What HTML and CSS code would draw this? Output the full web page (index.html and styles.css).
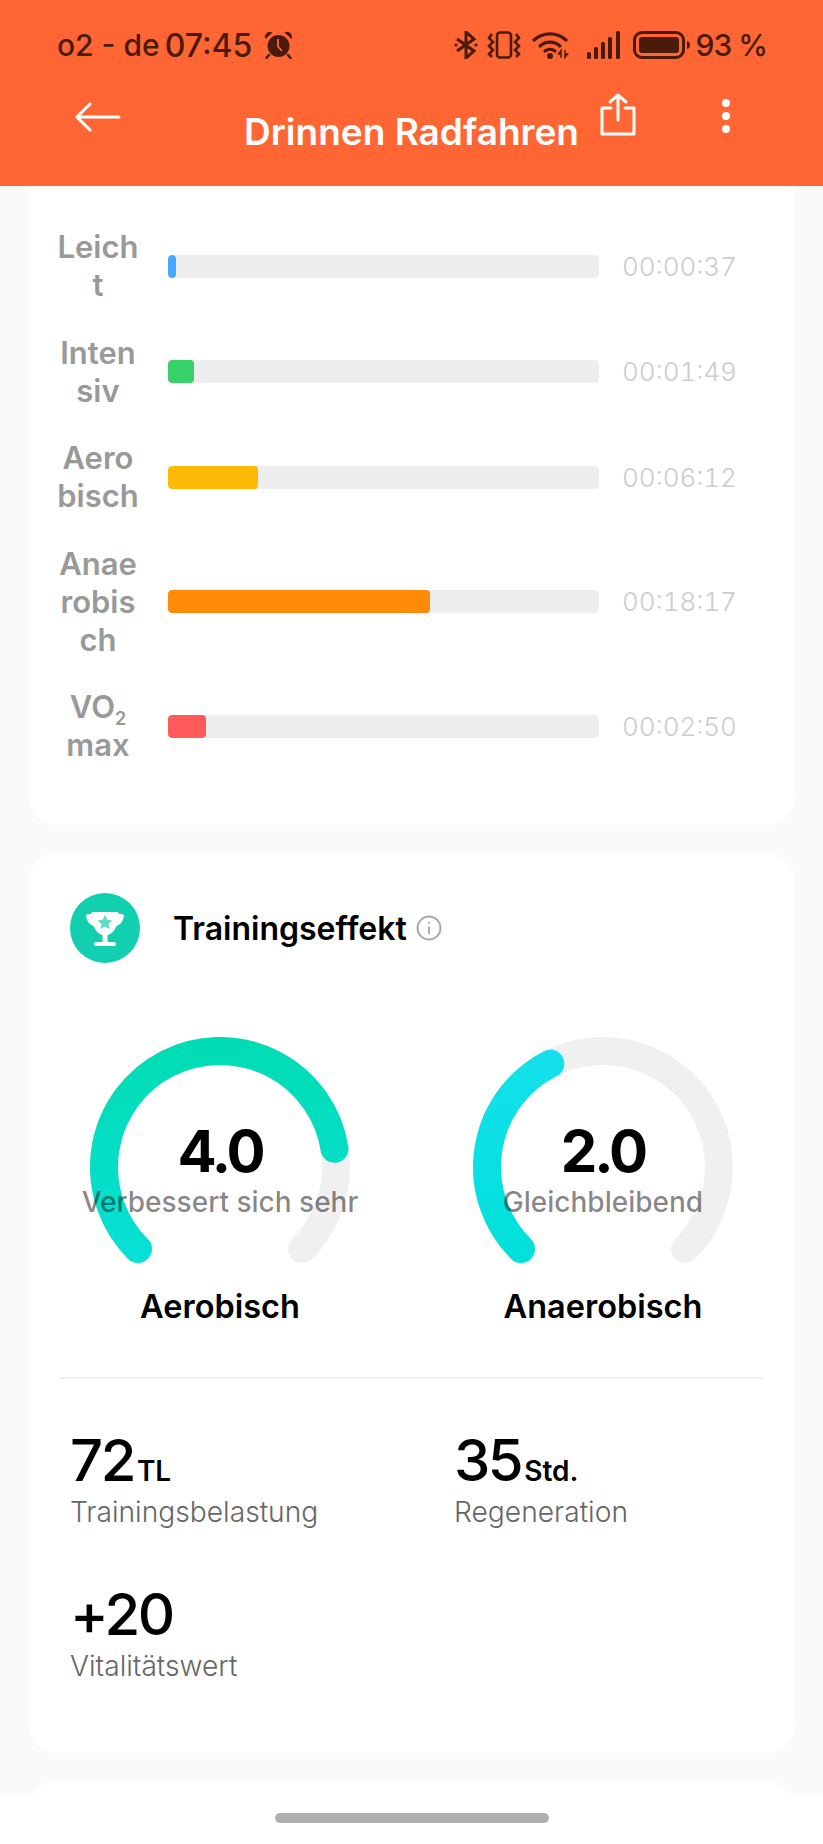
FILE: index.html
```html
<!DOCTYPE html>
<html lang="de">
<head>
  <meta charset="UTF-8" />
  <meta name="viewport" content="width=device-width, initial-scale=1.0"/>
  <title>Drinnen Radfahren</title>
  <link rel="stylesheet" href="styles.css">
</head>
<body>

<div class="screen">

  <header class="top">
    <div class="status">
      <div class="status-left">
        <span class="carrier">o2 - de</span>
        <span class="clock">07:45</span>
        <svg class="alarm" width="29" height="28" viewBox="0 0 29 28">
          <circle cx="14.5" cy="15" r="11" fill="#4a1b0b"/>
          <path d="M1.5 8 A5 5 0 0 1 8.5 1.5 Z M27.5 8 A5 5 0 0 0 20.5 1.5 Z" fill="#4a1b0b"/>
          <path d="M5 24 L2.5 27 M24 24 L26.5 27" stroke="#4a1b0b" stroke-width="2.5" stroke-linecap="round"/>
          <path d="M14 8 V15.5 L18 20" fill="none" stroke="#ff6633" stroke-width="1.8"/>
        </svg>
      </div>
      <div class="status-right">
        <svg class="ic-bt" width="24" height="28" viewBox="0 0 24 28" fill="none" stroke="#4a1b0b" stroke-width="3">
          <path d="M3 8 L20 20 L12 27 V1 L20 8 L3 20"/>
          <circle cx="2" cy="14" r="1.6" fill="#4a1b0b" stroke="none"/>
          <circle cx="22" cy="14" r="1.6" fill="#4a1b0b" stroke="none"/>
        </svg>
        <svg class="ic-vib" width="34" height="28" viewBox="0 0 34 28" fill="none" stroke="#4a1b0b" stroke-width="2.6">
          <rect x="10" y="1.5" width="14" height="25" rx="3"/>
          <path d="M5 3 L2 7 L6 11 L2 15 L6 19 L2 23 L5 26"/>
          <path d="M29 3 L32 7 L28 11 L32 15 L28 19 L32 23 L29 26"/>
        </svg>
        <svg class="ic-wifi" width="38" height="28" viewBox="0 0 38 28" fill="none" stroke="#4a1b0b" stroke-width="3.2" stroke-linecap="round">
          <path d="M2 9 A24 24 0 0 1 34 9"/>
          <path d="M8 15 A15 15 0 0 1 28 15"/>
          <path d="M13 20 A8 8 0 0 1 23 20"/>
          <circle cx="18" cy="25" r="3" fill="#4a1b0b" stroke="none"/>
          <path d="M29 27 V20 M26.5 23 L29 19.5 V23 Z M33 19 V26 M35.5 23 L33 26.5 V23 Z" stroke-width="1.4" stroke-linecap="butt" fill="#4a1b0b"/>
        </svg>
        <svg class="ic-signal" width="34" height="28" viewBox="0 0 34 28" fill="#4a1b0b">
          <rect x="0" y="21" width="4" height="7" rx="1.5"/>
          <rect x="7" y="16" width="4" height="12" rx="1.5"/>
          <rect x="14" y="11" width="4" height="17" rx="1.5"/>
          <rect x="21" y="6" width="4" height="22" rx="1.5"/>
          <rect x="29" y="0" width="4" height="28" rx="1.5"/>
        </svg>
        <svg class="ic-batt" width="59" height="28" viewBox="0 0 59 28" fill="none">
          <rect x="1.5" y="1.5" width="49" height="25" rx="7.5" stroke="#4a1b0b" stroke-width="3"/>
          <rect x="6" y="6" width="40" height="16" rx="3" fill="#4a1b0b"/>
          <path d="M54 10 Q57 10.5 57 14 Q57 17.5 54 18 Z" fill="#4a1b0b"/>
        </svg>
        <span class="percent">93 %</span>
      </div>
    </div>

    <div class="nav">
      <div class="nav-left">
        <svg class="back" width="46" height="30" viewBox="0 0 46 30" fill="none" stroke="#fff" stroke-width="3" stroke-linecap="round" stroke-linejoin="round">
          <path d="M44 15 H2 M15 2 L2 15 L15 28"/>
        </svg>
      </div>
      <h1 class="page-title">Drinnen Radfahren</h1>
      <div class="nav-right">
        <svg class="share" width="36" height="43" viewBox="0 0 36 43" fill="none" stroke="#fff" stroke-width="3" stroke-linecap="round" stroke-linejoin="round">
          <path d="M18 27 V2 M10 9 L18 2 L26 9"/>
          <path d="M11 15 H2 V41 H34 V15 H25"/>
        </svg>
        <svg class="dots" width="8" height="34" viewBox="0 0 8 34" fill="#fff">
          <circle cx="4" cy="4" r="4"/>
          <circle cx="4" cy="17" r="4"/>
          <circle cx="4" cy="30" r="4"/>
        </svg>
      </div>
    </div>
  </header>

  <main class="scroll">

    <section class="card zones">
      <div class="zone">
        <div class="zone-name">Leich<br>t</div>
        <div class="track"><div class="fill" style="width: 8px; background: #44aaff"></div></div>
        <div class="zone-time">00:00:37</div>
      </div>
      <div class="zone">
        <div class="zone-name">Inten<br>siv</div>
        <div class="track"><div class="fill" style="width: 26px; background: #38d068"></div></div>
        <div class="zone-time">00:01:49</div>
      </div>
      <div class="zone">
        <div class="zone-name">Aero<br>bisch</div>
        <div class="track"><div class="fill" style="width: 90px; background: #ffba08"></div></div>
        <div class="zone-time">00:06:12</div>
      </div>
      <div class="zone">
        <div class="zone-name">Anae<br>robis<br>ch</div>
        <div class="track"><div class="fill" style="width: 262px; background: #ff8a0a"></div></div>
        <div class="zone-time">00:18:17</div>
      </div>
      <div class="zone">
        <div class="zone-name">VO<sub>2</sub><br>max</div>
        <div class="track"><div class="fill" style="width: 38px; background: #ff5a5a"></div></div>
        <div class="zone-time">00:02:50</div>
      </div>
    </section>

    <section class="card effect">
      <div class="effect-head">
        <svg class="trophy" width="70" height="70" viewBox="0 0 70 70">
          <circle cx="35" cy="35" r="35" fill="#12cfb0"/>
          <path d="M23 19 H47 Q48.5 19 49 21 H52 Q54.5 21 53.5 25 Q52 31 46.5 33 Q43 41 37.5 42 V49 H44 Q46 49 46 51 Q46 53 44 53 H26 Q24 53 24 51 Q24 49 26 49 H32.5 V42 Q27 41 23.5 33 Q18 31 16.5 25 Q15.5 21 18 21 H21 Q21.5 19 23 19 Z" fill="#fff"/>
          <path d="M35 22 L37.2 26.8 L42.4 27.4 L38.5 30.9 L39.6 36 L35 33.4 L30.4 36 L31.5 30.9 L27.6 27.4 L32.8 26.8 Z" fill="#5fdcc6"/>
        </svg>
        <h2 class="effect-title">Trainingseffekt</h2>
        <svg class="info" width="26" height="26" viewBox="0 0 26 26" fill="none" stroke="#aaa" stroke-width="2">
          <circle cx="13" cy="13" r="11.5"/>
          <path d="M13 11.5 V19"/>
          <path d="M13 7 V8.5"/>
        </svg>
      </div>

      <div class="gauges">
        <div class="gauge">
          <div class="dial">
            <svg width="260" height="240" viewBox="0 0 260 240" fill="none" stroke-width="28" stroke-linecap="round">
              <defs>
                <linearGradient id="aero" gradientUnits="userSpaceOnUse" x1="0" y1="0" x2="0" y2="226">
                  <stop offset="0" stop-color="#00dcb2"/>
                  <stop offset="1" stop-color="#07e0d6"/>
                </linearGradient>
                <linearGradient id="anaero" gradientUnits="userSpaceOnUse" x1="0" y1="20" x2="0" y2="226">
                  <stop offset="0" stop-color="#14e0ec"/>
                  <stop offset="1" stop-color="#00e0da"/>
                </linearGradient>
              </defs>
              <path d="M47.98 212.02 A116 116 0 1 1 212.02 212.02" stroke="#f0f0f0"/>
              <path d="M47.98 212.02 A116 116 0 1 1 244.57 111.85" stroke="url(#aero)"/>
            </svg>
            <div class="dial-value">4.0</div>
            <div class="dial-note">Verbessert sich sehr</div>
          </div>
          <div class="gauge-name">Aerobisch</div>
        </div>
        <div class="gauge">
          <div class="dial">
            <svg width="260" height="240" viewBox="0 0 260 240" fill="none" stroke-width="28" stroke-linecap="round">
              <path d="M47.98 212.02 A116 116 0 1 1 212.02 212.02" stroke="#f0f0f0"/>
              <path d="M47.98 212.02 A116 116 0 0 1 77.34 26.64" stroke="url(#anaero)"/>
            </svg>
            <div class="dial-value">2.0</div>
            <div class="dial-note">Gleichbleibend</div>
          </div>
          <div class="gauge-name">Anaerobisch</div>
        </div>
      </div>

      <div class="metrics">
        <div class="metric">
          <div class="metric-num">72<span class="metric-unit">TL</span></div>
          <div class="metric-label">Trainingsbelastung</div>
        </div>
        <div class="metric">
          <div class="metric-num">35<span class="metric-unit">Std.</span></div>
          <div class="metric-label">Regeneration</div>
        </div>
        <div class="metric">
          <div class="metric-num">+20</div>
          <div class="metric-label">Vitalitätswert</div>
        </div>
      </div>
    </section>

    <section class="card rest"></section>
  </main>

  <div class="home-bar"><div class="home-pill"></div></div>
</div>

</body>
</html>
```

FILE: styles.css
```css
html, body {
  margin: 0;
  padding: 0;
  background: #fafafa;
  font-family: Inter, "Noto Sans", Arial, sans-serif;
}

.screen {
  width: 823px;
  height: 1844px;
  display: flex;
  flex-direction: column;
  overflow: hidden;
}

/* orange header */
.top {
  height: 186px;
  flex: none;
  background: #ff6633;
  box-sizing: border-box;
  padding-top: 29px;
}

.status {
  display: flex;
  justify-content: space-between;
  align-items: center;
  height: 32px;
  padding: 0 57px;
  color: #4a1b0b;
  font-size: 30px;
  font-weight: 500;
}

.status-left, .status-right {
  display: flex;
  align-items: center;
}

.carrier {
  margin-right: 5px;
}

.clock {
  font-size: 32px;
}

.alarm {
  margin-left: 12px;
}

.ic-bt { margin-right: 9px; }
.ic-vib { margin-right: 11px; }
.ic-wifi { margin-right: 17px; }
.ic-signal { margin-right: 12px; }
.ic-batt { margin-right: 4px; }

.percent {
  letter-spacing: -1px;
  margin-right: -1px;
}

.nav {
  display: grid;
  grid-template-columns: 1fr auto 1fr;
  height: 60px;
  margin-top: 32px;
}

.nav-left {
  padding: 9px 0 0 75px;
}

.page-title {
  margin: 17px 0 0;
  color: white;
  font-size: 37px;
  font-weight: 600;
  line-height: 44px;
}

.nav-right {
  display: flex;
  padding-left: 21px;
}

.dots {
  margin: 6px 0 0 86px;
}

/* cards */
.scroll {
  flex: 1;
  min-height: 0;
  padding: 0 28px;
  overflow: hidden;
}

.card {
  background: white;
  border-radius: 30px;
}

.zones {
  border-radius: 0 0 30px 30px;
  padding: 42px 0 61px 29px;
  display: flex;
  flex-direction: column;
  gap: 29.5px;
}

.zone {
  display: flex;
  align-items: center;
}

.zone-name {
  width: 82px;
  text-align: center;
  white-space: nowrap;
  color: #999;
  font-size: 31px;
  font-weight: 600;
  line-height: 38px;
}

.zone-name sub {
  font-size: 18px;
  line-height: 0;
}

.track {
  width: 431px;
  height: 23px;
  margin-left: 29px;
  background: #eee;
  border-radius: 4px;
  overflow: hidden;
}

.fill {
  height: 100%;
  border-radius: 4px;
}

.zone-time {
  margin-left: 23px;
  color: #ccc;
  font-size: 26px;
  font-weight: 300;
  font-variant-numeric: tabular-nums;
}

.effect {
  margin-top: 28px;
  height: 900px;
  box-sizing: border-box;
  padding: 40px 32px 0;
}

.effect-head {
  display: flex;
  align-items: center;
  padding-left: 10px;
}

.effect-title {
  margin: 0 9px 0 33px;
  color: black;
  font-size: 32px;
  font-weight: 600;
}

.gauges {
  display: flex;
  margin-top: 74px;
  padding-bottom: 50px;
  border-bottom: 2px solid #f0f0f0;
}

.gauge {
  flex: none;
  width: 383px;
  text-align: center;
}

.dial {
  position: relative;
  width: 260px;
  height: 240px;
  margin-left: 30px;
}

.dial svg {
  display: block;
}

.dial-value {
  position: absolute;
  left: 0;
  right: 0;
  top: 79px;
  color: black;
  font-size: 58px;
  font-weight: 700;
  line-height: 70px;
  letter-spacing: -3px;
}

.dial-note {
  position: absolute;
  left: -20px;
  right: -20px;
  top: 147px;
  color: rgba(0, 0, 0, 0.48);
  font-size: 28px;
  font-weight: 500;
  line-height: 36px;
}

.gauge-name {
  width: 260px;
  margin: 10px 0 0 30px;
  color: black;
  font-size: 32.5px;
  font-weight: 600;
  line-height: 40px;
}

.metrics {
  display: grid;
  grid-template-columns: 384px 1fr;
  row-gap: 54px;
  padding: 51px 0 0 10px;
}

.metric-num {
  color: black;
  font-size: 58px;
  font-weight: 500;
  line-height: 60px;
  letter-spacing: -2.5px;
}

.metric-unit {
  margin-left: 3px;
  font-size: 28px;
  font-weight: 600;
  line-height: 1;
  letter-spacing: 0;
}

.metric-label {
  margin-top: 4px;
  color: #666;
  font-size: 28.2px;
  font-weight: 300;
  line-height: 36px;
}

.rest {
  margin-top: 28px;
  height: 120px;
}

/* gesture bar */
.home-bar {
  height: 51px;
  flex: none;
  background: white;
  display: flex;
  justify-content: center;
  padding-top: 20px;
  box-sizing: border-box;
}

.home-pill {
  width: 274px;
  height: 10px;
  background: #b0b0b0;
  border-radius: 5px;
}
```
